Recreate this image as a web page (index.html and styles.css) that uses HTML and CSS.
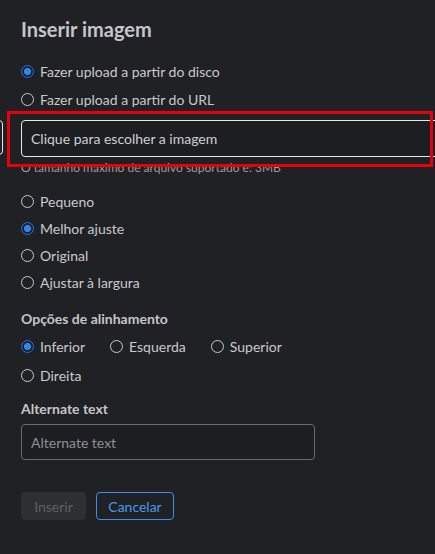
FILE: index.html
```html
<!DOCTYPE html>
<html lang="pt-br">
<head>
    <meta charset="UTF-8">
    <meta name="viewport" content="width=device-width, initial-scale=1.0">
    <title>Inserir imagem</title>
    <link rel="stylesheet" href="styles.css">
</head>
<body>
    <div class="dialog">
        <h2 class="titulo">Inserir imagem</h2>

        <div class="grupo grupoUpload">
            <label class="opcao"><input type="radio" name="origem" checked><span>Fazer upload a partir do disco</span></label>
            <label class="opcao"><input type="radio" name="origem"><span>Fazer upload a partir do URL</span></label>
        </div>

        <div class="arquivo">Clique para escolher a imagem</div>
        <p class="dica">O tamanho máximo de arquivo suportado é: 3MB</p>

        <div class="grupo grupoTamanho">
            <label class="opcao"><input type="radio" name="tamanho"><span>Pequeno</span></label>
            <label class="opcao"><input type="radio" name="tamanho" checked><span>Melhor ajuste</span></label>
            <label class="opcao"><input type="radio" name="tamanho"><span>Original</span></label>
            <label class="opcao"><input type="radio" name="tamanho"><span>Ajustar à largura</span></label>
        </div>

        <h3 class="rotulo">Opções de alinhamento</h3>
        <div class="grupo grupoAlinhamento">
            <label class="opcao"><input type="radio" name="alinha" checked><span>Inferior</span></label>
            <label class="opcao"><input type="radio" name="alinha"><span>Esquerda</span></label>
            <label class="opcao"><input type="radio" name="alinha"><span>Superior</span></label>
            <label class="opcao"><input type="radio" name="alinha"><span>Direita</span></label>
        </div>

        <h3 class="rotulo rotuloAlt">Alternate text</h3>
        <input type="text" class="campo" placeholder="Alternate text">

        <div class="botoes">
            <button class="botao botaoInserir" disabled>Inserir</button>
            <button class="botao botaoCancelar">Cancelar</button>
        </div>
    </div>

    <span class="bordaEsquerda"></span>
    <span class="destaque"></span>
</body>
</html>
```

FILE: styles.css
```css
html, body {
    margin: 0;
    height: 100%;
    overflow: hidden;
}
body {
    background-color: #1f2124;
    color: #c9cacc;
    font-family: Lato, "Open Sans", sans-serif;
    font-size: 14px;
    position: relative;
}
.dialog {
    padding: 16px 0 0 21px;
}
.titulo {
    margin: 0;
    font-size: 20px;
    line-height: 26px;
    font-weight: 700;
    color: #c4c6c9;
}
.grupo {
    display: flex;
    flex-direction: column;
}
.grupoUpload {
    margin-top: 15px;
}
.grupoUpload .opcao {
    height: 28px;
}
.opcao {
    display: flex;
    align-items: center;
    height: 27px;
    cursor: pointer;
}
.opcao input {
    appearance: none;
    -webkit-appearance: none;
    width: 13px;
    height: 13px;
    margin: 0 6px 0 0;
    border: 1.5px solid #c9cacc;
    border-radius: 50%;
    background: transparent;
    box-sizing: border-box;
    flex-shrink: 0;
}
.opcao input:checked {
    border-color: #1f74e0;
    background: radial-gradient(circle, #2f86f0 0 3.3px, transparent 3.8px);
}
.arquivo {
    margin-top: 7px;
    height: 37px;
    width: 440px;
    box-sizing: border-box;
    border: 1px solid #e8e8e8;
    border-radius: 4px;
    padding-left: 9px;
    line-height: 35px;
    color: #cfd0d2;
    background-color: #1c1e21;
}
.dica {
    margin: 4px 0 0;
    font-size: 12px;
    line-height: 14px;
    color: #9a9c9f;
}
.grupoTamanho {
    margin-top: 13px;
}
.rotulo {
    margin: 13px 0 0;
    font-size: 14px;
    line-height: 20px;
    font-weight: 700;
    color: #c4c6c9;
}
.grupoAlinhamento {
    flex-direction: row;
    flex-wrap: wrap;
    column-gap: 25px;
    width: 330px;
    margin-top: 3px;
}
.grupoAlinhamento .opcao {
    height: 29px;
}
.rotuloAlt {
    margin-top: 9px;
}
.campo {
    display: block;
    margin-top: 5px;
    width: 294px;
    height: 36px;
    box-sizing: border-box;
    border: 1px solid #686b70;
    border-radius: 4px;
    background-color: #1c1e21;
    padding: 0 9px;
    font-family: Lato, "Open Sans", sans-serif;
    font-size: 14px;
    color: #c9cacc;
}
.campo::placeholder {
    color: #8e9094;
}
.campo:focus {
    outline: none;
}
.botoes {
    display: flex;
    gap: 10px;
    margin-top: 32px;
}
.botao {
    height: 28px;
    border-radius: 4px;
    font-family: Lato, "Open Sans", sans-serif;
    font-size: 14px;
    padding: 0 10px;
    box-sizing: border-box;
}
.botaoInserir {
    width: 65px;
    border: none;
    background-color: #2d2f33;
    color: #5d6064;
}
.botaoCancelar {
    width: 78px;
    border: 1px solid #3a8ff0;
    background: transparent;
    color: #4a9af2;
}
.bordaEsquerda {
    position: absolute;
    left: -10px;
    top: 120px;
    width: 11px;
    height: 33px;
    border: 1px solid #e8e8e8;
    border-radius: 4px;
}
.destaque {
    position: absolute;
    left: 7px;
    top: 111px;
    width: 420px;
    height: 50px;
    border: 3px solid #e8000b;
}
```
